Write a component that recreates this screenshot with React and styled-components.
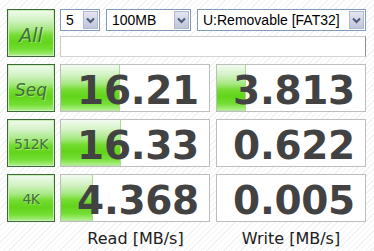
import React from "react";
import styled, { createGlobalStyle } from "styled-components";

const GlobalStyle = createGlobalStyle`
  html, body {
    margin: 0;
    padding: 0;
    width: 374px;
    height: 251px;
    overflow: hidden;
  }
  body {
    background-color: #ffffff;
    background-image: repeating-linear-gradient(
      135deg,
      #ffffff 0px,
      #ffffff 3px,
      #f2f2f2 3px,
      #f2f2f2 4px
    );
  }
`;

const Window = styled.div`
  display: grid;
  grid-template-columns: 48px 151px 150px;
  grid-template-rows: 48px 48px 48px 48px 19px;
  column-gap: 5px;
  row-gap: 7px;
  padding: 9px 8px 0 7px;
  box-sizing: border-box;
  width: 374px;
  height: 251px;
`;

const greenGradient = `linear-gradient(
  to bottom,
  #f2fbef 0%,
  #d2f2c4 22%,
  #a6e882 42%,
  #74dc30 55%,
  #62d41a 70%,
  #74de34 86%,
  #aef08a 100%
)`;

const TestButton = styled.div`
  box-sizing: border-box;
  width: 48px;
  height: 48px;
  border: 1px solid #3a6a38;
  box-shadow: inset 0 0 0 1px #c8f0b4;
  background: ${greenGradient};
  display: flex;
  align-items: center;
  justify-content: center;
  padding-top: ${(p) => (p.$small ? 2 : 4)}px;
  font-family: "DejaVu Sans", "Liberation Sans", sans-serif;
  font-style: ${(p) => (p.$italic ? "italic" : "normal")};
  font-size: ${(p) => p.$size}px;
  color: #44703a;
  letter-spacing: ${(p) => (p.$small ? "-0.5px" : "0")};
  text-shadow: 1px 1px 0 rgba(255, 255, 255, 0.35);
`;

const Controls = styled.div`
  grid-column: 2 / span 2;
  display: flex;
  flex-direction: column;
  gap: 5px;
`;

const ComboRow = styled.div`
  display: flex;
  gap: 6px;
  height: 22px;
`;

const Combo = styled.div`
  box-sizing: border-box;
  width: ${(p) => p.$w}px;
  height: 22px;
  border: 1px solid #7f9db9;
  background: #ffffff;
  display: flex;
  align-items: center;
  justify-content: space-between;
  padding: 1px;
  font-family: "Liberation Sans", Arial, sans-serif;
  font-size: 14px;
  color: #000000;
`;

const ComboText = styled.span`
  padding-left: 4px;
  white-space: nowrap;
`;

const DropButton = styled.div`
  box-sizing: border-box;
  width: 15px;
  height: 18px;
  border: 1px solid #b4b8cc;
  background: linear-gradient(to bottom, #e4e6f0 0%, #cdd1e2 60%, #c2c6da 100%);
  display: flex;
  align-items: center;
  justify-content: center;
`;

const ProgressBox = styled.div`
  box-sizing: border-box;
  height: 21px;
  border: 1px solid #cacaca;
  border-right-color: #8e8e8e;
  border-bottom-color: #d4d4d4;
  background: #ffffff;
`;

const ResultBox = styled.div`
  position: relative;
  box-sizing: border-box;
  width: 150px;
  height: 48px;
  border: 1px solid #bdbdbd;
  background: #ffffff;
  display: flex;
  align-items: center;
  justify-content: center;
  overflow: hidden;
`;

const Bar = styled.div`
  position: absolute;
  left: 0;
  top: 0;
  bottom: 0;
  box-sizing: border-box;
  border-right: 1px solid #a6dc8c;
  border-bottom: 1px solid #b4e6a0;
  background: ${greenGradient};
`;

const Value = styled.span`
  position: relative;
  padding-top: 4px;
  padding-left: 6px;
  font-family: "DejaVu Sans", Verdana, sans-serif;
  font-weight: bold;
  font-size: 39px;
  color: #424242;
  letter-spacing: -0.3px;
  line-height: 1;
`;

const Label = styled.div`
  display: flex;
  justify-content: center;
  align-items: flex-start;
  font-family: "DejaVu Sans", Verdana, sans-serif;
  font-size: 16px;
  line-height: 19px;
  color: #202020;
  white-space: nowrap;
`;

const Chevron = () => (
  <svg width="9" height="7" viewBox="0 0 9 7">
    <path d="M1 1.5 L4.5 5 L8 1.5" fill="none" stroke="#4c5a78" strokeWidth="2" />
  </svg>
);

const rows = [
  { name: "Seq", italic: true, size: 17, read: "16.21", write: "3.813", rb: 59, wb: 29 },
  { name: "512K", italic: false, size: 14, small: true, read: "16.33", write: "0.622", rb: 60, wb: 0 },
  { name: "4K", italic: false, size: 14, small: true, read: "4.368", write: "0.005", rb: 32, wb: 0 },
];

export default function App() {
  return (
    <>
      <GlobalStyle />
      <Window>
        <TestButton $italic $size={19}>All</TestButton>
        <Controls>
          <ComboRow>
            <Combo $w={40}>
              <ComboText>5</ComboText>
              <DropButton><Chevron /></DropButton>
            </Combo>
            <Combo $w={85}>
              <ComboText>100MB</ComboText>
              <DropButton><Chevron /></DropButton>
            </Combo>
            <Combo $w={169}>
              <ComboText>U:Removable [FAT32]</ComboText>
              <DropButton><Chevron /></DropButton>
            </Combo>
          </ComboRow>
          <ProgressBox />
        </Controls>
        {rows.map((r) => (
          <React.Fragment key={r.name}>
            <TestButton $italic={r.italic} $size={r.size} $small={r.small}>
              {r.name}
            </TestButton>
            <ResultBox>
              {r.rb > 0 && <Bar style={{ width: r.rb }} />}
              <Value>{r.read}</Value>
            </ResultBox>
            <ResultBox>
              {r.wb > 0 && <Bar style={{ width: r.wb }} />}
              <Value>{r.write}</Value>
            </ResultBox>
          </React.Fragment>
        ))}
        <div />
        <Label>Read [MB/s]</Label>
        <Label>Write [MB/s]</Label>
      </Window>
    </>
  );
}
